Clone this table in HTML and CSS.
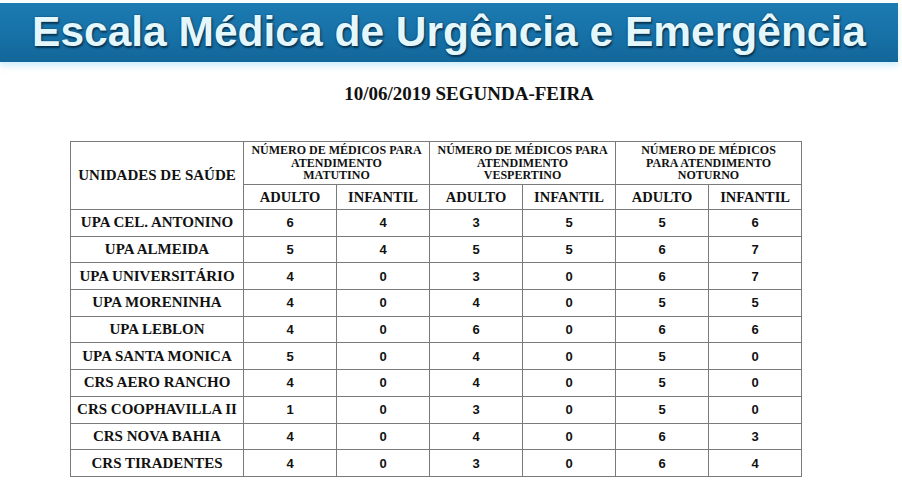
FILE: index.html
```html
<!DOCTYPE html>
<html lang="pt-BR">
<head>
<meta charset="utf-8">
<title>Escala Médica de Urgência e Emergência</title>
<link rel="stylesheet" href="styles.css">
</head>
<body>
<header class="banner">
  <h1 class="banner-title">Escala Médica de Urgência e Emergência</h1>
</header>
<h2 class="date">10/06/2019 SEGUNDA-FEIRA</h2>
<table class="scale">
  <colgroup>
    <col class="c-unit">
    <col class="c-num"><col class="c-num">
    <col class="c-num"><col class="c-num">
    <col class="c-num"><col class="c-num">
  </colgroup>
  <thead>
    <tr class="hrow1">
      <th rowspan="2" class="unit-head">UNIDADES DE SAÚDE</th>
      <th colspan="2" class="group">NÚMERO DE MÉDICOS PARA<br>ATENDIMENTO<br>MATUTINO</th>
      <th colspan="2" class="group">NÚMERO DE MÉDICOS PARA<br>ATENDIMENTO<br>VESPERTINO</th>
      <th colspan="2" class="group">NÚMERO DE MÉDICOS<br>PARA ATENDIMENTO<br>NOTURNO</th>
    </tr>
    <tr class="hrow2">
      <th>ADULTO</th><th>INFANTIL</th>
      <th>ADULTO</th><th>INFANTIL</th>
      <th>ADULTO</th><th>INFANTIL</th>
    </tr>
  </thead>
  <tbody>
    <tr><th>UPA CEL. ANTONINO</th><td>6</td><td>4</td><td>3</td><td>5</td><td>5</td><td>6</td></tr>
    <tr><th>UPA ALMEIDA</th><td>5</td><td>4</td><td>5</td><td>5</td><td>6</td><td>7</td></tr>
    <tr><th>UPA UNIVERSITÁRIO</th><td>4</td><td>0</td><td>3</td><td>0</td><td>6</td><td>7</td></tr>
    <tr><th>UPA MORENINHA</th><td>4</td><td>0</td><td>4</td><td>0</td><td>5</td><td>5</td></tr>
    <tr><th>UPA LEBLON</th><td>4</td><td>0</td><td>6</td><td>0</td><td>6</td><td>6</td></tr>
    <tr><th>UPA SANTA MONICA</th><td>5</td><td>0</td><td>4</td><td>0</td><td>5</td><td>0</td></tr>
    <tr><th>CRS AERO RANCHO</th><td>4</td><td>0</td><td>4</td><td>0</td><td>5</td><td>0</td></tr>
    <tr><th>CRS COOPHAVILLA II</th><td>1</td><td>0</td><td>3</td><td>0</td><td>5</td><td>0</td></tr>
    <tr><th>CRS NOVA BAHIA</th><td>4</td><td>0</td><td>4</td><td>0</td><td>6</td><td>3</td></tr>
    <tr><th>CRS TIRADENTES</th><td>4</td><td>0</td><td>3</td><td>0</td><td>6</td><td>4</td></tr>
  </tbody>
</table>
</body>
</html>
```
FILE: styles.css
```css
html, body {
  margin: 0;
  padding: 0;
  background: #ffffff;
}

body {
  width: 902px;
  height: 496px;
  overflow: hidden;
  font-family: "Liberation Serif", "Times New Roman", serif;
  color: #111;
}

.banner {
  margin: 3px 4px 0 0;
  height: 59px;
  background: linear-gradient(#1c7bb2, #1670a6 60%, #136698);
  display: flex;
  align-items: center;
  justify-content: center;
  box-shadow: 0 4px 6px rgba(170, 225, 245, 0.55);
}

.banner-title {
  margin: 0;
  white-space: nowrap;
  font-family: "Liberation Sans", Arial, sans-serif;
  font-weight: bold;
  font-size: 42.5px;
  line-height: 1;
  color: #e4f7fc;
  text-shadow: 0 0 2px #0b3d5e, 1px 2px 2px #08324e;
}

.date {
  margin: 21px 0 0 0;
  text-align: center;
  font-size: 19px;
  font-weight: bold;
  line-height: 22px;
  padding-left: 36px;
}

.scale {
  margin: 36px 0 0 70px;
  border-collapse: collapse;
  table-layout: fixed;
  width: 730px;
}

.c-unit { width: 173px; }
.c-num { width: 93px; }

.scale th,
.scale td {
  border: 1px solid #7a7a7a;
  padding: 0;
  text-align: center;
  vertical-align: middle;
  white-space: nowrap;
}

.hrow1 { height: 43px; }
.hrow2 { height: 25px; }
.scale tbody tr { height: 26.7px; }

.unit-head {
  font-size: 15px;
  font-weight: bold;
  padding-top: 12px;
}

.group {
  font-size: 12px;
  line-height: 12.5px;
  font-weight: bold;
  vertical-align: top;
  padding-top: 1px;
}

.hrow2 th {
  font-size: 14.5px;
  font-weight: bold;
}

.scale tbody th {
  font-size: 15px;
  font-weight: bold;
}

.scale td {
  font-family: "Liberation Sans", Arial, sans-serif;
  font-size: 13px;
  font-weight: bold;
}
```
